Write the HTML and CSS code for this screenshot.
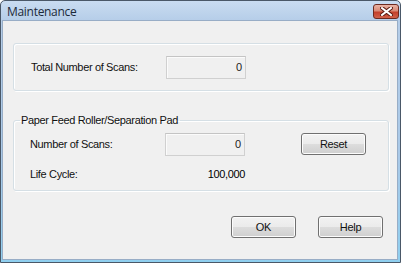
FILE: index.html
```html
<!DOCTYPE html>
<html lang="en">
  <head>
    <meta charset="UTF-8" />
    <title>Maintenance</title>
    <link rel="stylesheet" href="styles.css">
  </head>
  <body>
    <div class="window">
      <div class="titlebar">
        <span class="title">Maintenance</span>
        <div class="close">
          <svg width="13" height="9" viewBox="0 0 13 9">
            <path d="M2 1 L11 8 M11 1 L2 8" stroke="#5a1a10" stroke-width="4" stroke-linecap="square" />
            <path d="M2 1 L11 8 M11 1 L2 8" stroke="#ffffff" stroke-width="2" stroke-linecap="square" />
          </svg>
        </div>
      </div>
      <div class="client">
        <div class="group group-total">
          <span class="label">Total Number of Scans:</span>
          <div class="field">0</div>
        </div>

        <fieldset class="group group-roller">
          <legend>Paper Feed Roller/Separation Pad</legend>
          <div class="row">
            <span class="label">Number of Scans:</span>
            <div class="field">0</div>
            <button class="btn btn-reset">Reset</button>
          </div>
          <div class="row">
            <span class="label">Life Cycle:</span>
            <div class="value">100,000</div>
          </div>
        </fieldset>

        <div class="actions">
          <button class="btn">OK</button>
          <button class="btn">Help</button>
        </div>
      </div>
    </div>
  </body>
</html>
```

FILE: styles.css
```css
* {
  margin: 0;
  padding: 0;
  box-sizing: border-box;
}
body {
  font-family: "Liberation Sans", Arial, sans-serif;
  font-size: 11px;
  color: #000;
  background: #fff;
}
.window {
  width: 401px;
  height: 263px;
  display: flex;
  flex-direction: column;
  border: 1px solid #4a5868;
  border-radius: 5px 5px 0 0;
  background: linear-gradient(to bottom, #c9dcf1 0px, #b5cde8 20px, #a9c9e8 60%, #8fcfef 100%);
  padding: 0 2px 2px 1px;
}
.titlebar {
  height: 19px;
  display: flex;
  align-items: center;
  justify-content: space-between;
  padding-left: 5px;
}
.title {
  font-family: "Open Sans", "Liberation Sans", sans-serif;
  font-size: 12px;
  color: #1c2a3a;
  letter-spacing: -0.3px;
  margin-top: 1px;
}
.close {
  width: 26px;
  height: 15px;
  margin-top: 2px;
  margin-right: -1px;
  display: flex;
  align-items: center;
  justify-content: center;
  border: 1px solid #6d2a1f;
  border-radius: 3px;
  background: linear-gradient(to bottom, #eab3a4 0%, #d98a76 45%, #c4402b 55%, #d0614a 100%);
}
.client {
  flex: 1;
  border: 1px solid #98adc6;
  background: #f0f0f0;
  padding: 22px 8px 0 10px;
  display: flex;
  flex-direction: column;
}
.group {
  border: 1px solid #d5dfe5;
  border-radius: 3px;
  box-shadow: inset 1px 1px 0 #fff, 1px 1px 0 #fff;
}
.group-total {
  height: 48px;
  display: flex;
  align-items: center;
  padding-left: 17px;
}
.label {
  width: 135px;
  flex-shrink: 0;
  letter-spacing: -0.35px;
  color: #111;
}
.field {
  width: 80px;
  height: 23px;
  border: 1px solid #d0d0d0;
  border-top-color: #c4c4c4;
  box-shadow: inset 1px 1px 0 #fbfbfb;
  background: #f0f0f0;
  text-align: right;
  padding: 4px 3px 0 0;
  color: #222;
}
.group-roller {
  margin-top: 23px;
  padding: 7px 0 5px 16px;
}
.group-roller legend {
  margin-left: -10px;
  padding: 0 2px 0 1px;
  letter-spacing: -0.35px;
  color: #111;
}
.row {
  height: 22px;
  display: flex;
  align-items: center;
}
.row + .row {
  margin-top: 8px;
}
.value {
  width: 80px;
  text-align: right;
  letter-spacing: -0.35px;
  padding-right: 0;
}
.btn {
  width: 65px;
  height: 22px;
  border: 1px solid #707070;
  border-radius: 3px;
  background: linear-gradient(to bottom, #f2f2f2 0%, #ebebeb 50%, #dddddd 50%, #cfcfcf 100%);
  box-shadow: inset 0 0 0 1px #fcfcfc;
  font-family: "Liberation Sans", Arial, sans-serif;
  font-size: 11px;
  letter-spacing: -0.3px;
  color: #111;
}
.btn-reset {
  margin-left: 56px;
}
.actions {
  margin-top: 25px;
  margin-right: 6px;
  display: flex;
  justify-content: flex-end;
  gap: 22px;
}
```
